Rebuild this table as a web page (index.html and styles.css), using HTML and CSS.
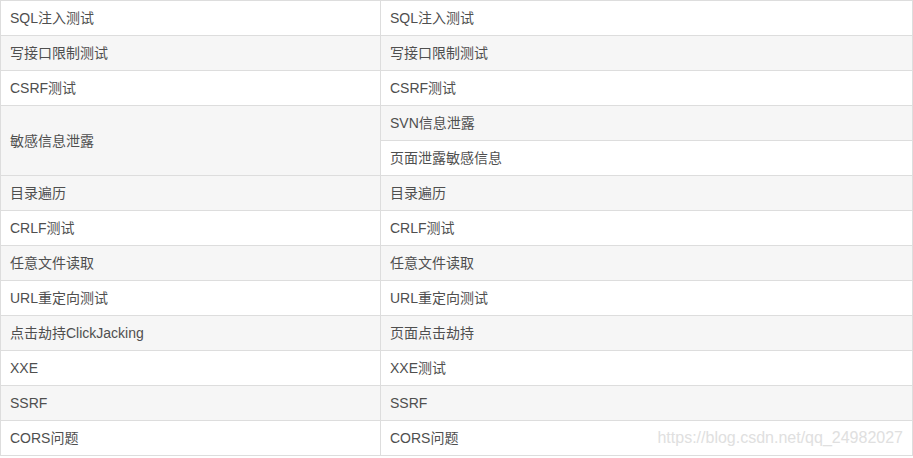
FILE: index.html
```html
<!DOCTYPE html>
<html lang="zh">
<head>
<meta charset="utf-8">
<link rel="stylesheet" href="styles.css">
</head>
<body>
<div class="wrap">
<table class="grid">
<tbody>
<tr><td class="c1">SQL注入测试</td><td>SQL注入测试</td></tr>
<tr><td class="c1">写接口限制测试</td><td>写接口限制测试</td></tr>
<tr><td class="c1">CSRF测试</td><td>CSRF测试</td></tr>
<tr><td class="c1" rowspan="2">敏感信息泄露</td><td>SVN信息泄露</td></tr>
<tr><td>页面泄露敏感信息</td></tr>
<tr><td class="c1">目录遍历</td><td>目录遍历</td></tr>
<tr><td class="c1">CRLF测试</td><td>CRLF测试</td></tr>
<tr><td class="c1">任意文件读取</td><td>任意文件读取</td></tr>
<tr><td class="c1">URL重定向测试</td><td>URL重定向测试</td></tr>
<tr><td class="c1">点击劫持ClickJacking</td><td>页面点击劫持</td></tr>
<tr><td class="c1">XXE</td><td>XXE测试</td></tr>
<tr><td class="c1">SSRF</td><td>SSRF</td></tr>
<tr><td class="c1">CORS问题</td><td>CORS问题</td></tr>
</tbody>
</table>
<span class="mark">https://blog.csdn.net/qq_24982027</span>
</div>
</body>
</html>
```
FILE: styles.css
```css
html, body {
  margin: 0;
  padding: 0;
  background: #fff;
}
.wrap {
  position: relative;
  width: 913px;
}
.grid {
  width: 913px;
  border-collapse: collapse;
  font-family: "Liberation Sans", "Noto Sans CJK SC", sans-serif;
  font-size: 14px;
  color: #4f4f4f;
}
.grid td {
  border: 1px solid #dddddd;
  height: 35px;
  padding: 0 9px;
  box-sizing: border-box;
  vertical-align: middle;
  line-height: 20px;
}
.grid td.c1 {
  width: 380px;
}
.grid tr:nth-child(even) td {
  background: #f6f6f6;
}
.grid tr:nth-child(odd) td {
  background: #ffffff;
}
.mark {
  position: absolute;
  right: 10px;
  top: 428px;
  font-family: "Liberation Sans", sans-serif;
  font-size: 16px;
  line-height: 20px;
  color: #e0e0e0;
}
```
